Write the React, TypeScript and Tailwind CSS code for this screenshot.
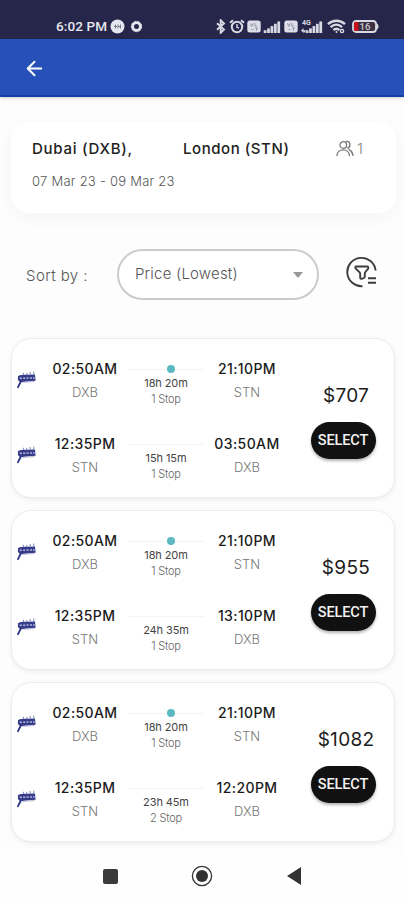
import { ArrowLeft } from "lucide-react";

type Leg = {
    depart: string;
    from: string;
    arrive: string;
    to: string;
    duration: string;
    stops: string;
    dot?: boolean;
}

type Flight = {
    price: string;
    legs: Leg[];
}

const outbound: Leg = { depart: "02:50AM", from: "DXB", arrive: "21:10PM", to: "STN", duration: "18h 20m", stops: "1 Stop", dot: true };

const flights: Flight[] = [
    {
        price: "$707",
        legs: [outbound, { depart: "12:35PM", from: "STN", arrive: "03:50AM", to: "DXB", duration: "15h 15m", stops: "1 Stop" }],
    },
    {
        price: "$955",
        legs: [outbound, { depart: "12:35PM", from: "STN", arrive: "13:10PM", to: "DXB", duration: "24h 35m", stops: "1 Stop" }],
    },
    {
        price: "$1082",
        legs: [outbound, { depart: "12:35PM", from: "STN", arrive: "12:20PM", to: "DXB", duration: "23h 45m", stops: "2 Stop" }],
    },
];

const SignalBars = () => (
    <svg width="18" height="12" viewBox="0 0 18 13" fill="#d9d9e4">
        <rect x="0" y="10" width="3" height="3" />
        <rect x="3.7" y="8" width="3" height="5" />
        <rect x="7.4" y="5.5" width="3" height="7.5" />
        <rect x="11.1" y="3" width="3" height="10" />
        <rect x="14.8" y="0.5" width="3" height="12.5" />
    </svg>
);

const VolteBadge = () => (
    <svg width="14" height="13" viewBox="0 0 14 13">
        <rect x="0.3" y="0.5" width="13.4" height="12" rx="2.5" fill="#dedee8" />
        <path d="M3.5 3.5l1.3 3 1.3-3M7.8 3v3h2.4M4.5 9.5h2M8 8h3M9.5 8v2.8" stroke="#8d8da0" strokeWidth="0.9" fill="none" />
    </svg>
);

const StatusBar = () => (
    <div className="flex h-[39px] shrink-0 items-end bg-[#26264a] pb-[5px] pl-[56px] text-[#e6e6ee]">
        <div className="w-[52px] whitespace-nowrap font-['Roboto'] text-[13.5px] font-medium leading-[15px] tracking-[0.1px]">6:02 PM</div>
        <svg className="ml-[2px]" width="15" height="15" viewBox="0 0 15 15">
            <circle cx="7.5" cy="7.5" r="7" fill="#e6e6ee" />
            <path d="M4 7.5h3M5.5 5.5v4M8 5.5v4M10.5 5.5v4M8 7.5h3" stroke="#77778c" strokeWidth="1" />
        </svg>
        <svg className="ml-[5px]" width="13" height="15" viewBox="0 0 13 15">
            <circle cx="6.5" cy="7.5" r="3.9" fill="none" stroke="#e6e6ee" strokeWidth="2.8" />
            <circle cx="6.5" cy="7.5" r="5.2" fill="none" stroke="#e6e6ee" strokeWidth="1" strokeDasharray="2 1.6" />
        </svg>
        <div className="ml-[72px] flex h-[15px] items-center">
            <svg width="12" height="15" viewBox="0 0 12 15" fill="none" stroke="#d9d9e4" strokeWidth="1.9">
                <path d="M2 4.2l7 6.4-3.3 3.2V1.2L9 4.4l-7 6.4" />
            </svg>
            <svg className="ml-[2px]" width="16" height="15" viewBox="0 0 16 15" fill="none" stroke="#d9d9e4" strokeWidth="2">
                <circle cx="8" cy="8" r="5.2" />
                <path d="M8 5v3.2l2 1" strokeWidth="1.4" />
                <path d="M1 3.8l3-2.6M15 3.8l-3-2.6" />
            </svg>
            <span className="ml-[2px]"><VolteBadge /></span>
            <span className="ml-[2px]"><SignalBars /></span>
            <span className="ml-[3px]"><VolteBadge /></span>
            <div className="relative ml-[7px]">
                <SignalBars />
                <span className="absolute left-[-3px] top-[-2px] font-['Roboto'] text-[7px] font-bold leading-[8px] text-[#d9d9e4]">4G</span>
                <svg className="absolute left-[-4px] top-[7px]" width="5" height="5" viewBox="0 0 5 5" fill="#d9d9e4">
                    <path d="M0 2.5L2.5 0v5zM2.5 2l2.5.5L3 5z" />
                </svg>
            </div>
            <svg className="ml-[4px]" width="19" height="15" viewBox="0 0 19 15" fill="none" stroke="#d9d9e4" strokeWidth="2.4">
                <path d="M1 5.2c5-4.6 12-4.6 17 0M3.6 8.2c3.6-3.2 8-3.2 11.4 0M6.4 11c2-1.7 4-1.7 6 0" />
                <circle cx="9.5" cy="13" r="1" fill="#d9d9e4" stroke="none" />
                <circle cx="15" cy="12" r="1.6" strokeWidth="1.4" />
            </svg>
            <svg className="ml-[6px]" width="28" height="13" viewBox="0 0 28 13">
                <path d="M23.5 2.5c4 1.5 4 6.5 0 8z" fill="#d9d9e4" />
                <rect x="1" y="1" width="23" height="11" rx="3" fill="#3b3142" stroke="#d9d9e4" strokeWidth="1.8" />
                <rect x="2" y="2" width="4.5" height="9" rx="1" fill="#c4101c" />
                <text x="13" y="10" fontFamily="Roboto" fontSize="9.5" fontWeight="500" textAnchor="middle" fill="#c9c9d4">16</text>
            </svg>
        </div>
    </div>
);

// small navy propeller mark of the airline
const AirlineLogo = () => (
    <svg width="20" height="20" viewBox="0 0 20 20">
        <path d="M1 6.2C3 4.6 6 4.9 9 4.8l9-.2.6 6.2-9 .6-6.4.8L.9 10z" fill="#373c88" />
        <path d="M6.4 5V2.8M9.8 5V3M13.2 4.8V2M16.8 4.8V1.6" stroke="#8b8fc0" strokeWidth="1.1" />
        <path d="M2.8 8.3h2M6.2 8.3h2M9.6 8.1h2M13 8h2M16 7.9h1.6" stroke="#b4b8dc" strokeWidth="1.5" />
        <path d="M3.6 12L1 17.2" stroke="#2e3383" strokeWidth="1.8" strokeLinecap="round" />
        <path d="M5.5 12.4l12-.8" stroke="#a9acd2" strokeWidth="0.8" />
    </svg>
);

const Stop = ({ time, code }: { time: string; code: string }) => (
    <div className="text-center">
        <div className="whitespace-nowrap text-[14px] font-medium leading-[22px] tracking-[0.4px] text-[#1b1b1b]">{time}</div>
        <div className="text-[13px] font-light leading-[24px] text-[#777]">{code}</div>
    </div>
);

const LegRow = ({ leg }: { leg: Leg }) => (
    <div className="grid h-[75px] grid-cols-[29px_86px_76px_86px] items-start">
        <div className="pl-[4px] pt-[12px]"><AirlineLogo /></div>
        <Stop time={leg.depart} code={leg.from} />
        <div className="text-center">
            <div className="relative flex h-[18px] items-center pt-[4px]">
                <div className="h-px w-full bg-[#f3f3f3]" />
                {leg.dot && <span className="absolute left-[39px] top-[7px] size-[8px] rounded-full bg-[#5bb9c2]" />}
            </div>
            <div className="whitespace-nowrap text-[11px] leading-[15px] tracking-[-0.1px] text-[#444]">{leg.duration}</div>
            <div className="pt-px text-[11px] font-light leading-[14px] tracking-[-0.2px] text-[#666]">{leg.stops}</div>
        </div>
        <Stop time={leg.arrive} code={leg.to} />
    </div>
);

const FlightCard = ({ flight }: { flight: Flight }) => (
    <div className="flex h-[160px] rounded-[20px] border border-[#ececec] bg-white pt-[19px] shadow-[0_2px_5px_rgba(0,0,0,0.06)]">
        <div className="w-[278px] pl-px">
            {flight.legs.map((leg, index) => (
                <LegRow key={index} leg={leg} />
            ))}
        </div>
        <div className="flex flex-1 flex-col items-center pl-[4px] pt-[24px]">
            <div className="pl-1 text-[19px] font-normal leading-[28px] tracking-[0.3px] text-[#1c1c1c]">{flight.price}</div>
            <button className="mr-[2px] mt-[12px] h-[37px] w-[65px] rounded-full bg-[#111] font-['Roboto'] text-[14.5px] font-medium tracking-[-0.1px] text-[#f2f2f2] shadow-[0_2px_3px_rgba(0,0,0,0.3)]">SELECT</button>
        </div>
    </div>
);

const App = () => {
    return (
        <div className="flex h-[900px] w-[404px] flex-col overflow-hidden bg-[#fdfdfd] font-['Inter',sans-serif]">
            <StatusBar />
            <div className="flex h-[58px] shrink-0 items-center border-b-2 border-[#103fa8] bg-[#2751b9] pl-[23px] pt-[2px] shadow-[0_1px_3px_rgba(0,0,0,0.2)]">
                <ArrowLeft size={23} strokeWidth={2} color="#fff" />
            </div>

            <div className="ml-[11px] mr-[8px] mt-[25px] h-[91px] shrink-0 rounded-[18px] bg-white px-[21px] pt-[16px] shadow-[0_5px_18px_rgba(0,0,0,0.035)]">
                <div className="flex h-[22px] items-center text-[15px] font-medium text-[#222]">
                    <div className="w-[151px] whitespace-nowrap tracking-[0.75px]">Dubai (DXB),</div>
                    <div className="w-[153px] whitespace-nowrap tracking-[0.55px]">London (STN)</div>
                    <svg className="mb-[2px]" width="18" height="17" viewBox="0 0 18 17" fill="none" stroke="#777" strokeWidth="1.3" strokeLinecap="round">
                        <circle cx="7.3" cy="5" r="3.3" />
                        <path d="M1 15.5c.4-7.5 12-7.5 12.4 0M10.2 1.4c4-.8 5.2 5.2 1.4 6.8M13 9.4c2.2 1.2 3.6 3.6 4 6" />
                    </svg>
                    <span className="pl-[3px] text-[15px] font-light text-[#888]">1</span>
                </div>
                <div className="mt-[10px] text-[13px] font-light leading-[22px] tracking-[0.25px] text-[#555]">07 Mar 23 - 09 Mar 23</div>
            </div>

            <div className="mt-[36px] flex h-[51px] shrink-0 items-center pl-[26px]">
                <div className="w-[91px] whitespace-nowrap pt-[3px] text-[15px] font-light tracking-[0.4px] text-[#555]">Sort by :</div>
                <div className="flex h-[51px] w-[202px] items-center justify-between rounded-full border-2 border-[#cbcbcb] bg-white pl-[16px] pr-[14px]">
                    <span className="text-[15px] font-light tracking-[0.2px] text-[#555]">Price (Lowest)</span>
                    <svg width="10" height="6" viewBox="0 0 10 6" fill="#999"><path d="M0 0h10L5 6z" /></svg>
                </div>
                <svg className="mb-[6px] ml-[27px]" width="32" height="32" viewBox="0 0 32 32" fill="none" stroke="#3c3c3c" strokeWidth="1.9">
                    <path d="M16.5 30.2A14.2 14.2 0 1 1 29.6 14.5" />
                    <path d="M10 10.5h11c1.2 0 1.6.8 1.2 2-.5 1.5-3.4 3-3.4 5v3.6c0 1-4.6 2.6-4.6 1v-4.4c0-2.2-4.2-3.7-4.8-5.7-.3-1 .1-1.5.6-1.5z" strokeLinejoin="round" />
                    <path d="M22 22.3h8M22 26.8h8" />
                </svg>
            </div>

            <div className="ml-[11px] mr-[9px] mt-[38px] flex h-[515px] shrink-0 flex-col gap-[12px]">
                {flights.map((flight) => (
                    <FlightCard key={flight.price} flight={flight} />
                ))}
            </div>

            <div className="flex flex-1 items-center bg-[#fefefe] pl-[103px] pb-px">
                <svg width="15" height="15" viewBox="0 0 15 15"><rect width="15" height="15" rx="2" fill="#3b3b3b" /></svg>
                <svg className="ml-[73px]" width="22" height="22" viewBox="0 0 22 22">
                    <circle cx="11" cy="11" r="9.6" fill="none" stroke="#333" strokeWidth="1.3" />
                    <circle cx="11" cy="11" r="6" fill="#333" />
                </svg>
                <svg className="ml-[74px]" width="14" height="18" viewBox="0 0 14 18"><path d="M0 9L14 0v18z" fill="#333" /></svg>
            </div>
        </div>
    );
};

export default App;
